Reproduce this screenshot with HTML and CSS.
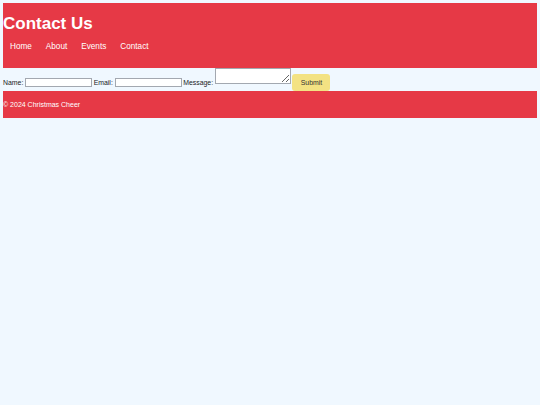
FILE: index.html
```html
<!DOCTYPE html>
<html lang="en">
<head>
<meta charset="utf-8">
<title>Contact Us</title>
<link rel="stylesheet" href="styles.css">
</head>
<body>
<header class="site-header">
  <h1 class="title">Contact Us</h1>
  <nav class="nav">
    <a class="nav-link" href="#">Home</a>
    <a class="nav-link" href="#">About</a>
    <a class="nav-link" href="#">Events</a>
    <a class="nav-link" href="#">Contact</a>
  </nav>
</header>
<form class="contact-form">
  <label class="lbl" for="name">Name:</label>
  <input class="field" id="name" type="text">
  <label class="lbl" for="email">Email:</label>
  <input class="field" id="email" type="email">
  <label class="lbl" for="msg">Message:</label>
  <textarea class="msg" id="msg"></textarea>
  <button class="submit" type="submit">Submit</button>
</form>
<footer class="site-footer">
  <p class="copy">© 2024 Christmas Cheer</p>
</footer>
</body>
</html>
```
FILE: styles.css
```css
html, body {
  background: #f0f8ff;
}
body {
  margin: 3px;
  font-family: "Liberation Sans", Arial, sans-serif;
}
.site-header {
  background: #e63946;
  color: #fff;
  padding: 11px 0 16px 0;
  display: flex;
  flex-direction: column;
}
.title {
  margin: 0;
  font-size: 17px;
  line-height: 20px;
  font-weight: bold;
}
.nav {
  display: flex;
  margin-top: 8px;
  padding-left: 7px;
  gap: 14px;
}
.nav-link {
  color: #fff;
  text-decoration: none;
  font-size: 8.2px;
  line-height: 10px;
}
.contact-form {
  display: flex;
  align-items: flex-end;
  gap: 1.7px;
  height: 23px;
  font-size: 6.9px;
  color: #222;
}
.lbl {
  line-height: 9px;
  margin-bottom: 4px;
  color: #222;
}
.field {
  box-sizing: border-box;
  width: 67px;
  height: 9px;
  padding: 0;
  margin: 0 0 3.7px 0;
  border: 1px solid #a3a8b0;
  background: #fff;
  font-size: 6.9px;
}
.msg {
  box-sizing: border-box;
  width: 76px;
  height: 16px;
  padding: 0;
  margin: 0 0 6.7px 0;
  border: 1px solid #a3a8b0;
  background: #fff;
  font-size: 6.9px;
}
.submit {
  box-sizing: border-box;
  width: 38px;
  height: 17px;
  margin: 0;
  padding: 0;
  border: none;
  border-radius: 3px;
  background: #f3e283;
  color: #333;
  font-family: "Liberation Sans", Arial, sans-serif;
  font-size: 6.9px;
}
.site-footer {
  background: #e63946;
  color: #fff;
  padding: 9px 0;
}
.copy {
  margin: 0;
  font-size: 7px;
  line-height: 9px;
}
```
